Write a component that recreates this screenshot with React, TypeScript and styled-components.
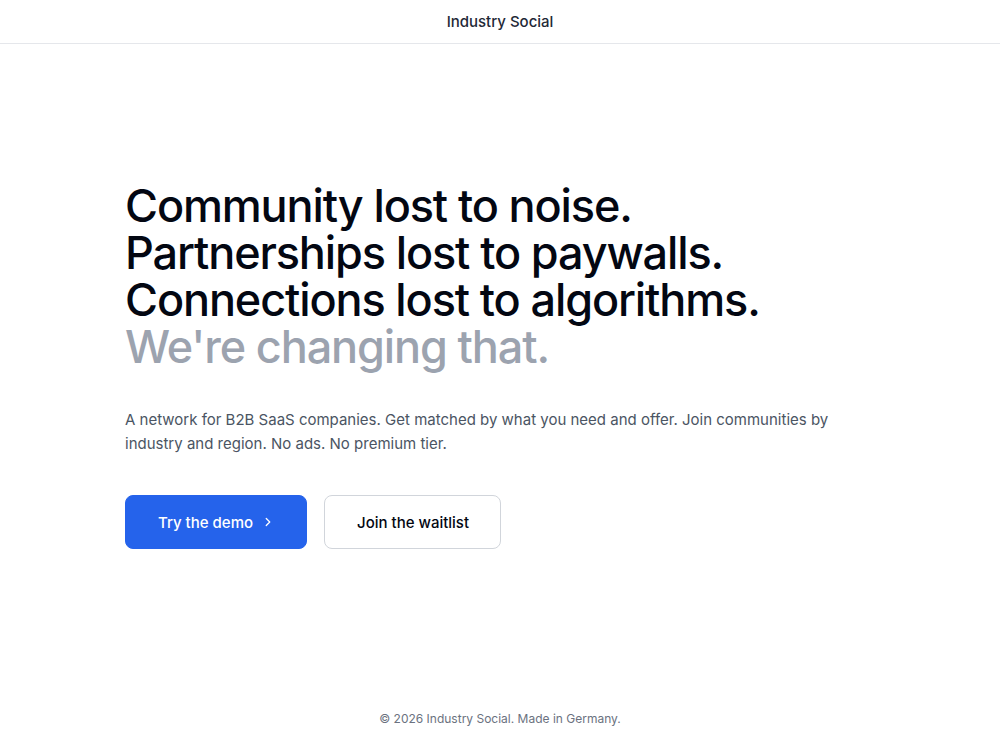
import styled, { createGlobalStyle } from 'styled-components';

const GlobalStyle = createGlobalStyle`
  html, body {
    margin: 0;
    padding: 0;
    background: #ffffff;
  }
  body {
    font-family: Inter, "Noto Sans", "Liberation Sans", sans-serif;
    -webkit-font-smoothing: antialiased;
  }
  * { box-sizing: border-box; }
`;

const Page = styled.div`
  min-height: 750px;
  display: flex;
  flex-direction: column;
`;

const Header = styled.header`
  height: 44px;
  border-bottom: 1px solid #e5e7eb;
  display: flex;
  align-items: center;
  justify-content: center;
`;

const Brand = styled.span`
  font-size: 15px;
  font-weight: 500;
  color: #1f2937;
`;

const Main = styled.main`
  flex: 1;
  display: flex;
  flex-direction: column;
  justify-content: center;
`;

const Hero = styled.section`
  width: 100%;
  max-width: 800px;
  margin: 0 auto;
  padding: 0 25px;
`;

const Headline = styled.h1`
  margin: 0;
  font-size: 45px;
  line-height: 47px;
  font-weight: 500;
  letter-spacing: -0.025em;
  color: #030712;
`;

const Muted = styled.span`
  display: block;
  color: #9ca3af;
`;

const Lead = styled.p`
  margin: 38px 0 0;
  max-width: 720px;
  font-size: 15px;
  line-height: 24px;
  color: #4b5563;
`;

const Actions = styled.div`
  margin-top: 39px;
  display: flex;
  gap: 17px;
`;

const Button = styled.button<{ $primary?: boolean }>`
  display: inline-flex;
  align-items: center;
  gap: 8px;
  height: 54px;
  padding: 0 31px 0 32px;
  border-radius: 8px;
  font-family: inherit;
  font-size: 15px;
  font-weight: 500;
  cursor: pointer;
  border: 1px solid ${p => (p.$primary ? '#2563eb' : '#d1d5db')};
  background: ${p => (p.$primary ? '#2563eb' : '#ffffff')};
  color: ${p => (p.$primary ? '#ffffff' : '#030712')};
`;

const Footer = styled.footer`
  padding: 24px 0 24px;
  text-align: center;
  font-size: 12px;
  color: #6b7280;
`;

function Chevron() {
  return (
    <svg width="14" height="14" viewBox="0 0 24 24" fill="none" stroke="currentColor" strokeWidth="2.2" strokeLinecap="round" strokeLinejoin="round">
      <path d="m9 18 6-6-6-6" />
    </svg>
  );
}

export default function App() {
  return (
    <Page>
      <GlobalStyle />
      <Header>
        <Brand>Industry Social</Brand>
      </Header>
      <Main>
        <Hero>
          <Headline>
            Community lost to noise.
            <br />
            Partnerships lost to paywalls.
            <br />
            Connections lost to algorithms.
            <Muted>We're changing that.</Muted>
          </Headline>
          <Lead>
            A network for B2B SaaS companies. Get matched by what you need and offer. Join communities by
            industry and region. No ads. No premium tier.
          </Lead>
          <Actions>
            <Button $primary>
              Try the demo
              <Chevron />
            </Button>
            <Button>Join the waitlist</Button>
          </Actions>
        </Hero>
      </Main>
      <Footer>© 2026 Industry Social. Made in Germany.</Footer>
    </Page>
  );
}
